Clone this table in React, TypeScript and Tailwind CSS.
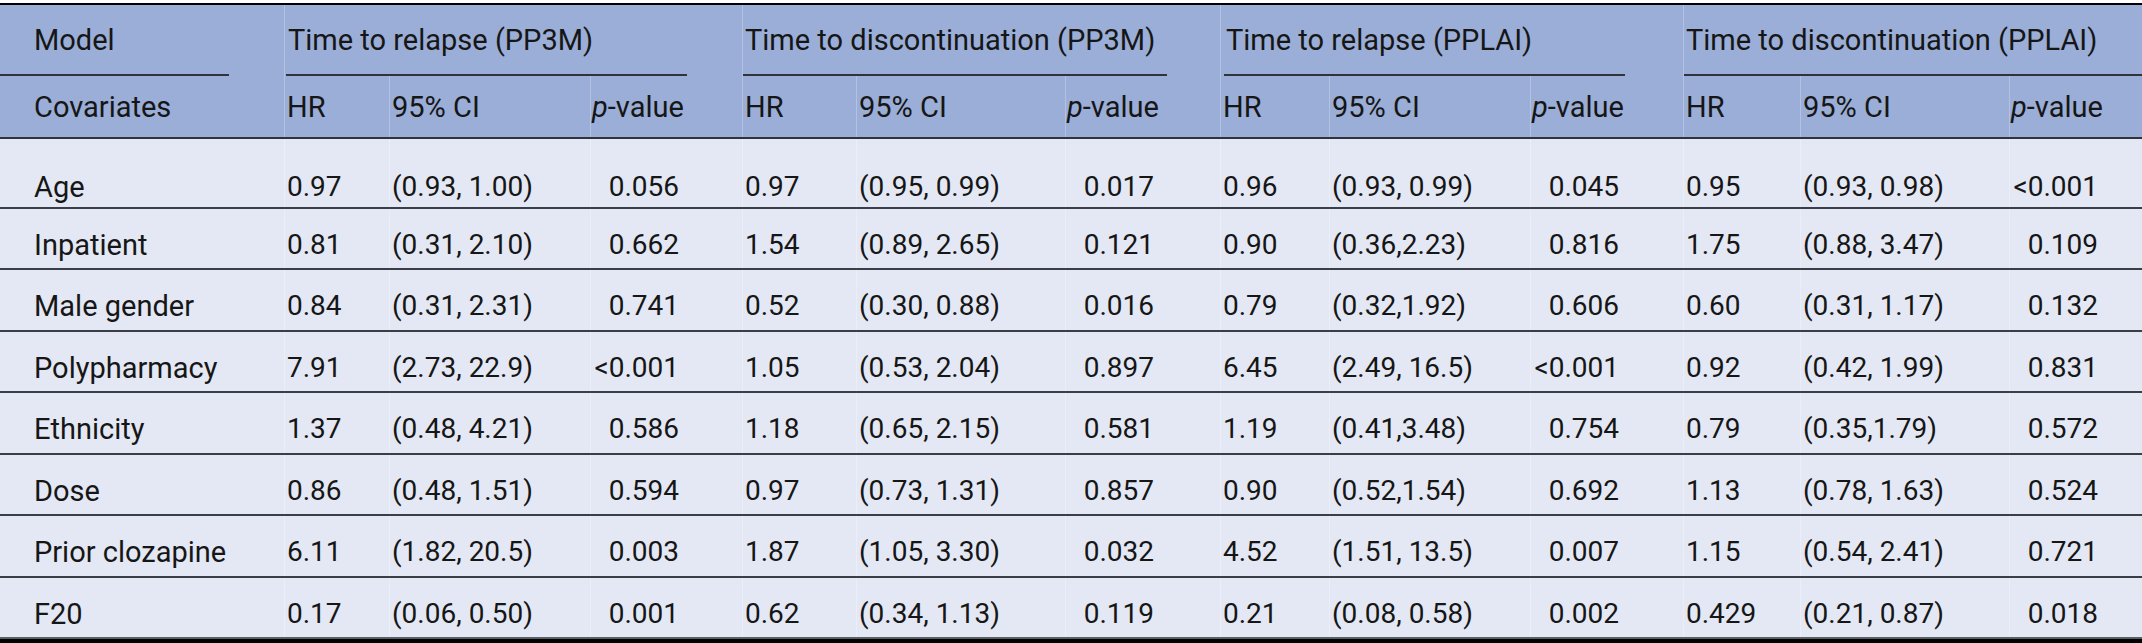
const cols =
  "grid grid-cols-[284px_105px_201px_152px_114px_209px_155px_109px_201px_153px_117px_209px_133px]";

const pPad = ["pr-[63px]", "pr-[66px]", "pr-[64px]", "pr-[44px]"];

const rows: string[][] = [
  ["Age", "0.97", "(0.93, 1.00)", "0.056", "0.97", "(0.95, 0.99)", "0.017", "0.96", "(0.93, 0.99)", "0.045", "0.95", "(0.93, 0.98)", "<0.001"],
  ["Inpatient", "0.81", "(0.31, 2.10)", "0.662", "1.54", "(0.89, 2.65)", "0.121", "0.90", "(0.36,2.23)", "0.816", "1.75", "(0.88, 3.47)", "0.109"],
  ["Male gender", "0.84", "(0.31, 2.31)", "0.741", "0.52", "(0.30, 0.88)", "0.016", "0.79", "(0.32,1.92)", "0.606", "0.60", "(0.31, 1.17)", "0.132"],
  ["Polypharmacy", "7.91", "(2.73, 22.9)", "<0.001", "1.05", "(0.53, 2.04)", "0.897", "6.45", "(2.49, 16.5)", "<0.001", "0.92", "(0.42, 1.99)", "0.831"],
  ["Ethnicity", "1.37", "(0.48, 4.21)", "0.586", "1.18", "(0.65, 2.15)", "0.581", "1.19", "(0.41,3.48)", "0.754", "0.79", "(0.35,1.79)", "0.572"],
  ["Dose", "0.86", "(0.48, 1.51)", "0.594", "0.97", "(0.73, 1.31)", "0.857", "0.90", "(0.52,1.54)", "0.692", "1.13", "(0.78, 1.63)", "0.524"],
  ["Prior clozapine", "6.11", "(1.82, 20.5)", "0.003", "1.87", "(1.05, 3.30)", "0.032", "4.52", "(1.51, 13.5)", "0.007", "1.15", "(0.54, 2.41)", "0.721"],
  ["F20", "0.17", "(0.06, 0.50)", "0.001", "0.62", "(0.34, 1.13)", "0.119", "0.21", "(0.08, 0.58)", "0.002", "0.429", "(0.21, 0.87)", "0.018"],
];

const groups = [
  { title: "Time to relapse (PP3M)", span: "col-span-3", line: "ml-px mr-[55px]" },
  { title: "Time to discontinuation (PP3M)", span: "col-span-3", line: "mr-[53px]" },
  { title: "Time to relapse (PPLAI)", span: "col-span-3", line: "ml-[3px] mr-[58px]" },
  { title: "Time to discontinuation (PPLAI)", span: "col-span-3", line: "" },
];

function PHead() {
  return (
    <span>
      <i>p</i>-value
    </span>
  );
}

export default function App() {
  return (
    <div className="w-[2142px] h-[643px] bg-white pt-[3px] font-['Roboto',sans-serif] text-[29px] leading-[34px] text-[#161616]">
      <div className="border-t-2 border-black">
        {/* header */}
        <div className="bg-[#9aaed7]">
          <div className={cols}>
            <div className="h-[71px]">
              <div className="mr-[55px] h-full flex items-center pl-[34px] border-b-2 border-[#2f333b]">Model</div>
            </div>
            {groups.map((g) => (
              <div key={g.title} className={`${g.span} h-[71px] border-l border-white/25`}>
                <div className={`${g.line} h-full flex items-center pl-[2px] whitespace-nowrap border-b-2 border-[#2f333b]`}>
                  {g.title}
                </div>
              </div>
            ))}
          </div>
          <div className={`${cols} border-b-2 border-[#2f333b]`}>
            <div className="h-[61px] flex items-center pl-[34px]">Covariates</div>
            {[0, 1, 2, 3].map((g) => [
              <div key={`hr${g}`} className="h-[61px] flex items-center pl-[2px] border-l border-white/25">HR</div>,
              <div key={`ci${g}`} className="h-[61px] flex items-center pl-[2px] border-l border-white/25">95% CI</div>,
              <div key={`p${g}`} className="h-[61px] flex items-center pl-[1px] border-l border-white/25">
                <PHead />
              </div>,
            ])}
          </div>
        </div>

        {/* body */}
        <div className="bg-[#e3e8f4]">
          {rows.map((r, i) => (
            <div
              key={r[0]}
              className={`${cols} border-b-2 ${i === 0 ? "h-[70px]" : "h-[61.43px]"} ${
                i === rows.length - 1 ? "border-[#5a5e66]" : "border-[#3a3e46]"
              }`}
            >
              {r.map((v, j) => {
                const pad = i === 0 ? "pt-[31px]" : "pt-[19px]";
                if (j === 0) return <div key={j} className={`${pad} pl-[34px] whitespace-nowrap`}>{v}</div>;
                const kind = (j - 1) % 3;
                const g = Math.floor((j - 1) / 3);
                if (kind === 2)
                  return (
                    <div key={j} className={`${pad} ${pPad[g]} text-right text-[28px] border-l border-white/25`}>
                      {v}
                    </div>
                  );
                return (
                  <div key={j} className={`${pad} pl-[2px] text-[28px] whitespace-nowrap border-l border-white/25`}>
                    {v}
                  </div>
                );
              })}
            </div>
          ))}
        </div>
        <div className="h-[4px] bg-black" />
      </div>
    </div>
  );
}
